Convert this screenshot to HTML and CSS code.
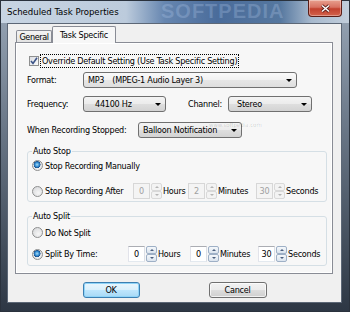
FILE: index.html
```html
<!DOCTYPE html>
<html>
<head>
    <meta charset="utf-8">
    <title>Scheduled Task Properties</title>
    <link rel="stylesheet" href="styles.css">
</head>
<body>
<div class="window">
    <div class="titlebar">
        <span class="title">Scheduled Task Properties</span>
        <span class="watermark">SOFTPEDIA</span>
        <span class="close">
            <svg width="11" height="9" viewBox="0 0 11 9">
                <path d="M2 1.5 L9 7.5 M9 1.5 L2 7.5" stroke="#5a1f1a" stroke-width="3" fill="none"/>
                <path d="M2 1.5 L9 7.5 M9 1.5 L2 7.5" stroke="#fff" stroke-width="1.5" fill="none"/>
            </svg>
        </span>
    </div>

    <div class="client">
        <div class="tabs">
            <div class="tab">General</div>
            <div class="tab active">Task Specific</div>
        </div>

        <div class="panel">
            <div class="check-row">
                <span class="checkbox">
                    <svg width="8" height="8" viewBox="0 0 8 8">
                        <path d="M1 4 L3 6.5 L7 0.8" stroke="#3c5488" stroke-width="1.6" fill="none"/>
                    </svg>
                </span>
                <span class="focus">Override Default Setting (Use Task Specific Setting)</span>
            </div>

            <div class="row row-format">
                <span class="label">Format:</span>
                <div class="combo combo-format">
                    <span>MP3</span><span class="codec">(MPEG-1 Audio Layer 3)</span>
                    <i class="arrow"></i>
                </div>
            </div>

            <div class="row row-freq">
                <span class="label">Frequency:</span>
                <div class="combo combo-freq">
                    <span>44100 Hz</span>
                    <i class="arrow"></i>
                </div>
                <span class="label label-channel">Channel:</span>
                <div class="combo combo-channel">
                    <span>Stereo</span>
                    <i class="arrow"></i>
                </div>
            </div>

            <div class="row row-stopped">
                <span class="label label-wide">When Recording Stopped:</span>
                <div class="combo combo-stopped">
                    <span>Balloon Notification</span>
                    <i class="arrow"></i>
                </div>
            </div>

            <fieldset class="group group-stop">
                <legend>Auto Stop</legend>
                <div class="radio-row first">
                    <span class="radio on"></span>
                    <span>Stop Recording Manually</span>
                </div>
                <div class="radio-row spin-row">
                    <div class="lead lead-stop">
                        <span class="radio"></span>
                        <span>Stop Recording After</span>
                    </div>
                    <span class="spin-box off">0</span>
                    <span class="spinner off"><i class="up"></i><i class="down"></i></span>
                    <span class="unit unit-hours-stop">Hours</span>
                    <span class="spin-box off">2</span>
                    <span class="spinner off"><i class="up"></i><i class="down"></i></span>
                    <span class="unit unit-minutes">Minutes</span>
                    <span class="spin-box off">30</span>
                    <span class="spinner off"><i class="up"></i><i class="down"></i></span>
                    <span class="unit">Seconds</span>
                </div>
            </fieldset>

            <fieldset class="group group-split">
                <legend>Auto Split</legend>
                <div class="radio-row first">
                    <span class="radio"></span>
                    <span>Do Not Split</span>
                </div>
                <div class="radio-row spin-row">
                    <div class="lead lead-split">
                        <span class="radio on"></span>
                        <span>Split By Time:</span>
                    </div>
                    <span class="spin-box">0</span>
                    <span class="spinner"><i class="up"></i><i class="down"></i></span>
                    <span class="unit unit-hours-split">Hours</span>
                    <span class="spin-box">0</span>
                    <span class="spinner"><i class="up"></i><i class="down"></i></span>
                    <span class="unit unit-minutes">Minutes</span>
                    <span class="spin-box">30</span>
                    <span class="spinner"><i class="up"></i><i class="down"></i></span>
                    <span class="unit">Seconds</span>
                </div>
            </fieldset>

            <span class="stamp">www.softpedia.com</span>
        </div>

        <div class="buttons">
            <button class="btn default">OK</button>
            <button class="btn cancel">Cancel</button>
        </div>
    </div>
</div>
</body>
</html>
```

FILE: styles.css
```css
html, body{
    margin: 0;
    padding: 0;
}

body{
    width: 350px;
    height: 312px;
    overflow: hidden;
    font-family: "DejaVu Sans Condensed", "Liberation Sans", sans-serif;
    font-size: 9px;
    letter-spacing: -0.25px;
    color: #000;
}

.window{
    box-sizing: border-box;
    width: 350px;
    height: 312px;
    padding: 0 8px 9px 7px;
    display: flex;
    flex-direction: column;
    background:
        linear-gradient(to right, #c8d5e3 0%, #bccbdc 36%, #6686b0 47%, #4a6c9b 62%, #55779f 80%, #a7b9cd 89%, #c3cfdc 100%) top / 100% 23px no-repeat,
        linear-gradient(to bottom, #9aa8b8 0%, #6b7888 40%, #2d3744 100%);
    box-shadow: inset 0 0 0 1px #2a323d;
}

/* title bar */

.titlebar{
    position: relative;
    flex: none;
    height: 23px;
    display: flex;
    align-items: flex-start;
}

.title{
    position: relative;
    z-index: 1;
    margin-top: 6px;
    font-size: 9.5px;
    line-height: 12px;
    letter-spacing: 0;
    color: #000;
}

.watermark{
    position: absolute;
    left: 154px;
    top: 0;
    font-family: "Liberation Sans", sans-serif;
    font-weight: bold;
    font-size: 20px;
    line-height: 22px;
    letter-spacing: 1px;
    color: rgba(180, 202, 235, 0.28);
}

.close{
    position: relative;
    margin-left: auto;
    box-sizing: border-box;
    width: 34px;
    height: 17px;
    display: flex;
    align-items: center;
    justify-content: center;
    border: 1px solid #5b1d16;
    border-top: none;
    border-radius: 0 0 4px 4px;
    background: linear-gradient(#e8a18f 0%, #d87262 45%, #c2412e 55%, #d3624b 100%);
    box-shadow: inset 0 0 0 1px rgba(255, 255, 255, 0.35);
}

/* client area */

.client{
    flex: 1;
    box-sizing: border-box;
    display: flex;
    flex-direction: column;
    background-color: #f0f0f0;
    border: 1px solid #5c6776;
}

.tabs{
    position: relative;
    z-index: 2;
    display: flex;
    align-items: flex-end;
    height: 16px;
    margin-top: 2px;
    padding-left: 7px;
}

.tab{
    box-sizing: border-box;
    display: flex;
    align-items: center;
    justify-content: center;
    height: 12px;
    width: 36px;
    margin-left: 1px;
    border: 1px solid #898c95;
    border-bottom: none;
    border-radius: 2px 2px 0 0;
    letter-spacing: -0.4px;
    background: linear-gradient(#f3f3f3, #e3e3e3);
}

.tab.active{
    width: 64px;
    height: 17px;
    margin-left: 0;
    margin-bottom: -1px;
    padding-bottom: 1px;
    letter-spacing: -0.25px;
    background: #f7f7f7;
}

.panel{
    position: relative;
    box-sizing: border-box;
    flex: none;
    height: 232px;
    margin: 0 8px 0 7px;
    padding: 11px 5px 7px 11px;
    display: flex;
    flex-direction: column;
    border: 1px solid #898c95;
    background-color: #f7f7f7;
    box-shadow: inset 0 0 0 1px #fff;
}

/* checkbox */

.check-row{
    display: flex;
    align-items: center;
    height: 14px;
    margin-left: 2px;
}

.checkbox{
    box-sizing: border-box;
    width: 10px;
    height: 10px;
    display: flex;
    align-items: center;
    justify-content: center;
    border: 1px solid #8e8f8f;
    background: linear-gradient(135deg, #dcdee3, #fbfbfb);
}

.focus{
    margin-left: 1px;
    padding: 0 1px;
    line-height: 12px;
    border: 1px dotted #000;
}

/* label + combo rows */

.row{
    display: flex;
    align-items: center;
    height: 16px;
}

.row-format{
    margin-top: 4px;
}

.row-freq{
    margin-top: 8px;
}

.row-stopped{
    margin-top: 10px;
}

.label{
    width: 56px;
    flex: none;
}

.label-channel{
    width: 40px;
    margin-left: 22px;
}

.label-wide{
    width: 111px;
}

.combo{
    box-sizing: border-box;
    height: 16px;
    display: flex;
    align-items: center;
    padding-left: 4px;
    border: 1px solid #707070;
    border-radius: 3px;
    background: linear-gradient(#f4f4f4 0%, #ebebeb 50%, #dedede 51%, #d3d3d3 100%);
}

.combo-format{
    width: 214px;
    background: linear-gradient(#fafafa 0%, #f1f1f1 50%, #e6e6e6 51%, #dedede 100%);
}

.codec{
    margin-left: 8px;
}

.combo-freq{
    width: 83px;
    padding-left: 11px;
}

.combo-channel{
    width: 84px;
    padding-left: 8px;
}

.combo-stopped{
    width: 104px;
}

.arrow{
    margin-left: auto;
    margin-right: 4px;
    width: 0;
    height: 0;
    border-left: 3px solid transparent;
    border-right: 3px solid transparent;
    border-top: 3px solid #000;
}

/* group boxes */

.group{
    margin: 7px 0 0 0;
    padding: 0 0 2px 4px;
    border: 1px solid #d5dfe5;
    border-radius: 3px;
    display: flex;
    flex-direction: column;
}

.group legend{
    padding: 0 1px;
    line-height: 12px;
}

.group-split{
    margin-top: 8px;
    padding-bottom: 3px;
}

.radio-row{
    display: flex;
    align-items: center;
    height: 13px;
}

.group-stop .first{
    margin-top: 2px;
}

.group-split .first{
    margin-top: 4px;
}

.spin-row{
    height: 16px;
}

.group-stop .spin-row{
    margin-top: 11px;
}

.group-split .spin-row{
    margin-top: 7px;
}

.lead{
    display: flex;
    align-items: center;
    flex: none;
}

.lead-stop{
    width: 101px;
}

.lead-split{
    width: 96px;
}

.radio{
    box-sizing: border-box;
    width: 11px;
    height: 11px;
    margin-right: 2px;
    flex: none;
    border: 1px solid #8e8f8f;
    border-radius: 50%;
    background: radial-gradient(circle at 60% 65%, #f6f6f6 0%, #dadbdd 80%);
}

.radio.on{
    background:
        radial-gradient(circle at 45% 40%, #a9dbf6 0%, #2f8ad0 30%, #1c4f8c 45%, transparent 50%),
        radial-gradient(circle at 60% 65%, #f6f6f6 0%, #dadbdd 80%);
}

/* spin edits */

.spin-box{
    box-sizing: border-box;
    width: 17px;
    height: 16px;
    display: flex;
    align-items: center;
    justify-content: center;
    border: 1px solid #abadb3;
    border-left-color: #e2e3ea;
    border-right-color: #dbdfe6;
    border-bottom-color: #e3e9ef;
    background-color: #fff;
}

.spin-box.off{
    color: #a0a0a0;
    border-color: #d7d7d7;
    background-color: #f4f4f4;
}

.spinner{
    box-sizing: border-box;
    width: 11px;
    height: 16px;
    margin-left: 1px;
    display: flex;
    flex-direction: column;
}

.spinner i{
    flex: 1;
    display: flex;
    align-items: center;
    justify-content: center;
    border: 1px solid #9eb0c6;
    border-radius: 2px;
    background: linear-gradient(#f5f8fb, #dbe4ee);
}

.spinner i:after{
    content: "";
    width: 0;
    height: 0;
    border-left: 2px solid transparent;
    border-right: 2px solid transparent;
}

.spinner .up:after{
    border-bottom: 2px solid #4b5f7e;
}

.spinner .down:after{
    border-top: 2px solid #4b5f7e;
}

.spinner.off i{
    border-color: #d9d9d9;
    background: #f3f3f3;
}

.spinner.off .up:after{
    border-bottom-color: #b5b5b5;
}

.spinner.off .down:after{
    border-top-color: #b5b5b5;
}

.unit{
    margin-left: 1px;
    flex: none;
}

.unit-hours-stop{
    width: 25px;
}

.unit-hours-split{
    width: 32px;
}

.unit-minutes{
    width: 38px;
}

.stamp{
    position: absolute;
    left: 193px;
    top: 78px;
    font-size: 6px;
    letter-spacing: 0;
    color: rgba(0, 0, 0, 0.16);
}

/* dialog buttons */

.buttons{
    display: flex;
    justify-content: center;
    gap: 69px;
    margin-top: 8px;
}

.btn{
    box-sizing: border-box;
    height: 16px;
    padding: 0;
    font-family: inherit;
    font-size: 9px;
    letter-spacing: -0.25px;
    color: #000;
    border: 1px solid #707070;
    border-radius: 3px;
    background: linear-gradient(#f2f2f2 0%, #ebebeb 50%, #dddddd 51%, #cfcfcf 100%);
    box-shadow: inset 0 0 0 1px rgba(255, 255, 255, 0.7);
}

.btn.default{
    width: 57px;
    border-color: #3c7fb1;
    background: linear-gradient(#eaf6fd 0%, #d9f0fc 50%, #bee6fd 51%, #a7d9f5 100%);
    box-shadow: inset 0 0 0 1px #8fd4f8;
}

.btn.cancel{
    width: 58px;
}
```
